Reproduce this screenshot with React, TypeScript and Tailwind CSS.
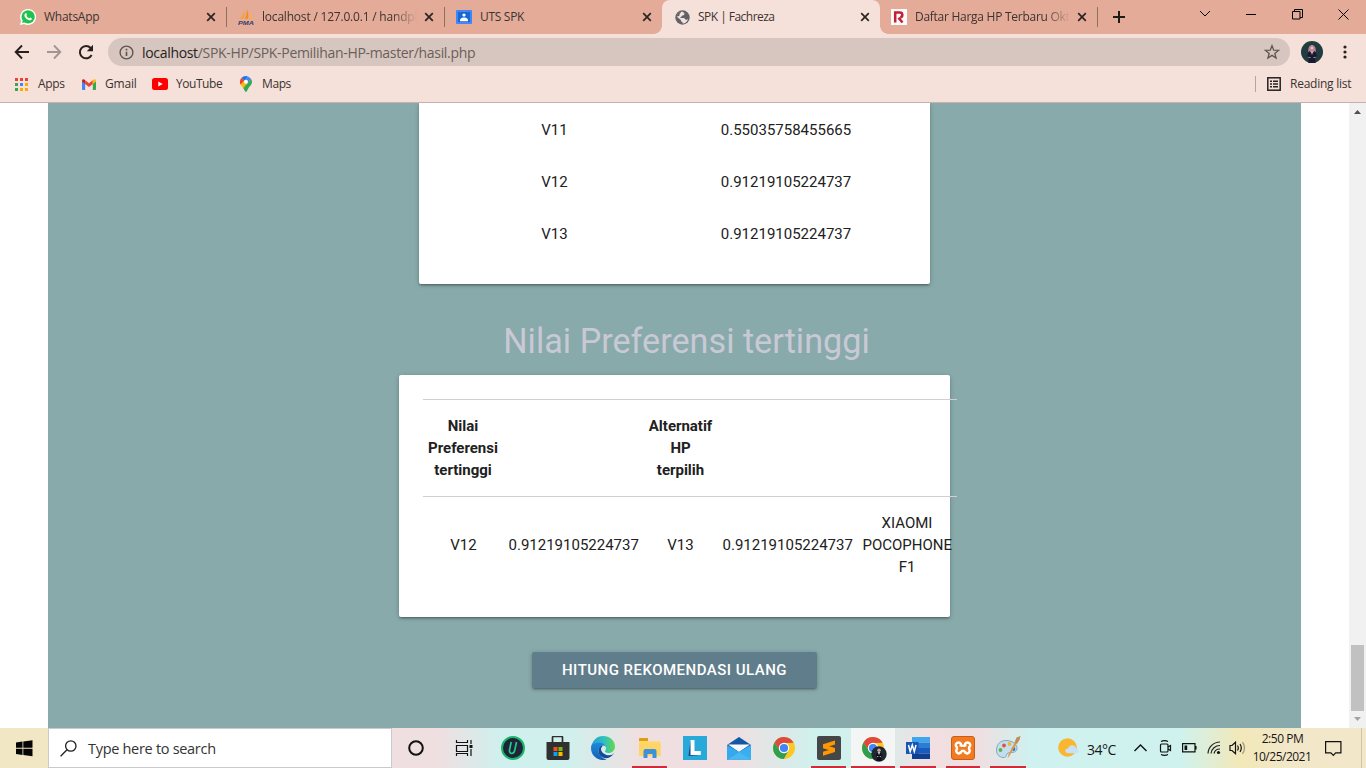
import type { ReactNode } from "react";

const UI = "font-['Open_Sans','Noto_Sans',sans-serif]";

function CloseX() {
  return (
    <svg width="10" height="10" viewBox="0 0 10 10" className="shrink-0">
      <path d="M1.2 1.2 8.8 8.8M8.8 1.2 1.2 8.8" stroke="#2b2422" strokeWidth="1.7" />
    </svg>
  );
}

/* ---------- favicons ---------- */

function WhatsAppIcon() {
  return (
    <svg width="16" height="16" viewBox="0 0 24 24">
      <path d="M12 0a12 12 0 0 0-10.300 18L0 24l6.200-1.600A12 12 0 1 0 12 0z" fill="#fff" />
      <circle cx="12.200" cy="11.800" r="10" fill="#1fc24d" />
      <path d="M3 21l1.500-5 4 3.500z" fill="#1fc24d" />
      <path d="M8.300 6.300c.5-.4 1-.3 1.300.3l.8 1.900c.2.500-.8 1.300-.8 1.700.8 1.700 2.200 3 4 3.800.5 0 1.200-1.400 1.700-1.200l2.100 1c.5.300.4 1.100 0 1.800-.8 1.200-2.300 1.600-3.900 1.100-3.200-.9-5.600-3.200-6.700-5.900-.6-1.700.3-3.500 1.500-4.500z" fill="#fff" />
    </svg>
  );
}

function PmaIcon() {
  return (
    <svg width="16" height="16" viewBox="0 0 16 16">
      <path d="M1 10C4 8.500 5.500 5 6 1.500 7 4 6.800 7.500 5.500 9.700z" fill="#f8a13a" />
      <path d="M6.800 9.800C8.600 7.500 8.400 4 9 .5c1.500 3 1.600 6 1 9.200z" fill="#f68d1c" />
      <path d="M11 9.700c.8-2 .7-4.200.6-6.200C13.500 5.500 14.500 8 15.500 10z" fill="#fbb050" />
      <text x="0" y="15.500" fontSize="6.200" fontWeight="900" fontStyle="italic" fontFamily="Liberation Sans, sans-serif" textLength="16" lengthAdjust="spacingAndGlyphs" fill="#34406f">PMA</text>
    </svg>
  );
}

function ClassroomIcon() {
  return (
    <svg width="16" height="14" viewBox="0 0 16 14">
      <rect width="16" height="14" rx="1" fill="#4285f4" />
      <rect x="2" y="2" width="12" height="10" fill="#1967d2" />
      <circle cx="8" cy="5" r="1.600" fill="#fff" />
      <path d="M4 11.200V9.700C4.800 8 6.500 7.600 8 7.600s3.200.4 4 2.100v1.500z" fill="#fff" />
    </svg>
  );
}

function GlobeIcon() {
  return (
    <svg width="15" height="15" viewBox="0 0 20 20">
      <circle cx="10" cy="10" r="9.600" fill="#5f6368" />
      <path d="M10.500 2.300c1.500.8 1 2.200 2.100 2.500.8.500-.6 2.400-2.500 2.600-1.200.1-.9 1.900-2.600 2-.6.300-.6 1.300.3 1.300h3.800c1.800.2 1.600 2.200 3.500 2.400 1.200 0 2-.8 2.500-1.200-1 3.500-4.300 6.100-7.500 6v-2c-1.800-.1-2.300-1-2.200-2.600L2.500 9c.4-4 3.900-7.200 8-6.700z" fill="#f5e1da" />
      <path d="M2.400 8.800c.3-3.600 2.700-5.800 6.100-6.500L6.300 5l-.6 3.100z" fill="#5f6368" />
    </svg>
  );
}

function RIcon() {
  return (
    <svg width="16" height="16" viewBox="0 0 16 16">
      <rect width="16" height="16" fill="#fafafa" />
      <path d="M4.200 13.500V3.500h4.600c3.200 0 3.400 4.400.4 4.800M7.500 8.800l4 4.700" stroke="#c51f36" strokeWidth="2.500" fill="none" />
    </svg>
  );
}

type TabProps = { icon: ReactNode; title: string; active?: boolean; fade?: boolean; line?: boolean; track?: string };

function Tab({ icon, title, active, fade, line, track = "" }: TabProps) {
  return (
    <div className={`relative flex h-[34px] w-[218px] shrink-0 items-center pl-3 pr-[10px] ${active ? "rounded-t-[8px] bg-[#f5e1da]" : ""}`}>
      {active && (
        <>
          <span className="absolute -left-2 bottom-0 size-2 bg-[radial-gradient(circle_at_0_0,#e3ab98_7.500px,#f5e1da_8px)]" />
          <span className="absolute -right-2 bottom-0 size-2 bg-[radial-gradient(circle_at_100%_0,#e3ab98_7.500px,#f5e1da_8px)]" />
        </>
      )}
      <span className="flex w-4 shrink-0 justify-center">{icon}</span>
      <span
        className={`ml-2 min-w-0 flex-1 whitespace-nowrap text-[12px] text-[#3d3331] ${track} ${fade ? "[mask-image:linear-gradient(to_right,black_130px,transparent_155px)]" : ""}`}
      >
        {title}
      </span>
      <CloseX />
      {line && <span className="absolute right-[-1px] top-[7px] h-5 w-px bg-[#8d6f65]" />}
    </div>
  );
}

function TabStrip() {
  return (
    <div className="flex h-[34px] bg-[#e3ab98] pl-2">
      <Tab icon={<WhatsAppIcon />} title="WhatsApp" line track="tracking-[-0.250px]" />
      <Tab icon={<PmaIcon />} title="localhost / 127.0.0.1 / handph" fade line track="tracking-[-0.200px]" />
      <Tab icon={<ClassroomIcon />} title="UTS SPK" track="tracking-[-0.300px]" />
      <Tab icon={<GlobeIcon />} title="SPK | Fachreza" active track="tracking-[-0.530px]" />
      <div className="-ml-px flex">
        <Tab icon={<RIcon />} title="Daftar Harga HP Terbaru Okt" fade line track="tracking-[-0.270px]" />
      </div>
      <svg className="ml-[16px] mt-[11px] shrink-0" width="12" height="12" viewBox="0 0 12 12">
        <path d="M6 0v12M0 6h12" stroke="#201a19" strokeWidth="2" />
      </svg>
      <div className="ml-auto flex h-7 items-center text-black">
        <svg className="mr-[35px]" width="12" height="12" viewBox="0 0 12 12" fill="none" stroke="currentColor"><path d="m1 3 5 5 5-5" /></svg>
        <svg className="mr-[35px]" width="11" height="11" viewBox="0 0 11 11" stroke="currentColor"><path d="M0 5.500h10" /></svg>
        <svg className="mr-[35px]" width="11" height="11" viewBox="0 0 11 11" fill="none" stroke="currentColor"><path d="M.5 2.500h7.500v7.500H.5zM2.500 2.500v-2h8v8H8" /></svg>
        <svg className="mr-[17px]" width="11" height="11" viewBox="0 0 11 11" stroke="currentColor"><path d="m.5.5 10 10M10.500.5l-10 10" /></svg>
      </div>
    </div>
  );
}

function Toolbar() {
  return (
    <div className="flex h-9 items-center bg-[#f5e1da] pl-[14px]">
      <svg width="16" height="16" viewBox="0 0 16 16" fill="none" stroke="#27201f" strokeWidth="1.900"><path d="M15 8H2M8 1.500 1.700 8 8 14.500" /></svg>
      <svg className="ml-4" width="16" height="16" viewBox="0 0 16 16" fill="none" stroke="#a39593" strokeWidth="1.900"><path d="M1 8h13M8 1.500 14.300 8 8 14.500" /></svg>
      <svg className="ml-4" width="16" height="16" viewBox="0 0 16 16"><path d="M13.600 11A6.200 6.200 0 1 1 12.700 4" fill="none" stroke="#27201f" strokeWidth="2" /><path d="M15 .8v6.400H8.800z" fill="#27201f" /></svg>
      <div className="ml-[14px] flex h-7 w-[1182px] items-center rounded-full bg-[#d7c6bf] pl-[11px] pr-[10px]">
        <svg width="15" height="15" viewBox="0 0 15 15" fill="none" stroke="#5c5452"><circle cx="7.500" cy="7.500" r="6.400" strokeWidth="1.400" /><path d="M7.500 6.700v4.300M7.500 3.800v1.600" strokeWidth="1.600" /></svg>
        <span className="ml-2 flex-1 whitespace-nowrap text-[14px] tracking-[-0.320px] text-[#6a5f5b]">
          <span className="text-[#272120]">localhost</span>/SPK-HP/SPK-Pemilihan-HP-master/hasil.php
        </span>
        <svg width="16" height="16" viewBox="0 0 24 24" fill="none" stroke="#5f5653" strokeWidth="2"><path d="m12 2.500 2.600 6.700 7.200.4-5.600 4.500 1.900 7L12 17.100 5.900 21.100l1.900-7-5.600-4.500 7.200-.4z" /></svg>
      </div>
      <svg className="ml-[11px]" width="22" height="22" viewBox="0 0 22 22">
        <circle cx="11" cy="11" r="11" fill="#213b41" />
        <path d="M7.200 11C7.200 6 8.500 4 11 4s3.800 2 3.800 7L13.500 12h-5z" fill="#b98396" />
        <circle cx="11" cy="7" r="1.500" fill="#e6c0a9" />
        <path d="M6 14.500 8 10l3 2 3-2 2 4.500-1.800 1.500.5 6h-7.400l.5-6z" fill="#151c31" />
        <path d="M9.500 10 11 14l1.500-4z" fill="#d3a3ad" />
        <path d="M7.500 16.500h2M12.500 16.500h2" stroke="#c98f80" />
      </svg>
      <svg className="ml-5" width="4" height="14" viewBox="0 0 4 14" fill="#27201f"><circle cx="2" cy="2" r="1.600" /><circle cx="2" cy="7" r="1.600" /><circle cx="2" cy="12" r="1.600" /></svg>
    </div>
  );
}

const appDots = ["#ea4335", "#ea4335", "#ea4335", "#34a853", "#4285f4", "#fbab05", "#34a853", "#fbab05", "#fbab05"];

function Bookmarks() {
  return (
    <div className="flex h-[33px] items-center border-b border-[#c3b2ad] bg-[#f5e1da] pb-1 pl-[15px] pr-[15px] text-[12px] text-[#3b3230]">
      <div className="grid w-[13px] grid-cols-[repeat(3,3px)] gap-[2px]">
        {appDots.map((c, i) => <span key={i} className="size-[3px]" style={{ background: c }} />)}
      </div>
      <span className="ml-[10px] w-[27px] whitespace-nowrap tracking-[-0.300px]">Apps</span>
      <svg className="ml-[17px]" width="14" height="11" viewBox="0 0 14 11">
        <path d="M0 2v8.200c0 .5.300.8.800.8h2.400V4.600z" fill="#4285f4" />
        <path d="M14 2v8.200c0 .5-.3.800-.8.800h-2.400V4.600z" fill="#34a853" />
        <path d="M3.200 1.200 7 4.200l3.800-3v3.700L7 7.900 3.200 4.900z" fill="#ea4335" />
        <path d="M0 2C0 0 1.800-.4 3.200 1.200v3.700L0 2.500z" fill="#c5221f" />
        <path d="M14 2c0-2-1.800-2.400-3.200-.8v3.700l3.200-2.400z" fill="#fbbc04" />
      </svg>
      <span className="ml-[9px] w-[31px] whitespace-nowrap tracking-[-0.180px]">Gmail</span>
      <svg className="ml-4" width="16" height="12" viewBox="0 0 16 12"><rect width="16" height="12" rx="2.500" fill="#f00" /><path d="m6.300 3.500 4.400 2.500-4.400 2.500z" fill="#fff" /></svg>
      <span className="ml-2 w-[46px] whitespace-nowrap tracking-[-0.450px]">YouTube</span>
      <svg className="ml-[18px]" width="12" height="16" viewBox="0 0 12 16">
        <path d="M6 0a6 6 0 0 0-4.600 2.100L4.500 4.800 8 .4A6 6 0 0 0 6 0z" fill="#1a73e8" />
        <path d="M1.400 2.100A6 6 0 0 0 .7 8.800l3.800-4z" fill="#ea4335" />
        <path d="M8 .4 4.300 4.800l3.300 2.800 3.600-4.300A6 6 0 0 0 8 .4z" fill="#4285f4" />
        <path d="M.7 8.800c.6 1.200 1.700 2 2.500 3.300L7.800 7.400 4.400 4.500z" fill="#fbbc04" />
        <path d="M11.200 3.300 3.200 12.100C4.500 14 5 16 6 16s1.400-2.600 3-4.800C10.500 9.500 12 8.300 12 6c0-1-.3-1.900-.8-2.700z" fill="#34a853" />
        <circle cx="6" cy="5.800" r="2" fill="#fff" />
      </svg>
      <span className="ml-[10px] whitespace-nowrap tracking-[-0.400px]">Maps</span>
      <div className="ml-auto flex items-center">
        <span className="h-4 w-px bg-[#b9a49d]" />
        <svg className="ml-[11px]" width="14" height="14" viewBox="0 0 14 14" fill="none" stroke="#27201f"><rect x=".8" y=".8" width="12.400" height="12.400" strokeWidth="1.500" /><path d="M3 4.200h2M6 4.200h5M3 7h2M6 7h5M3 9.800h2M6 9.800h5" strokeWidth="1.400" /></svg>
        <span className="ml-[9px] w-[61px] whitespace-nowrap tracking-[-0.250px]">Reading list</span>
      </div>
    </div>
  );
}

/* ---------- page ---------- */

const scores = [
  ["V11", "0.55035758455665"],
  ["V12", "0.91219105224737"],
  ["V13", "0.91219105224737"],
];

const cardShadow = "shadow-[0_2px_2px_0_rgba(0,0,0,0.14),0_3px_1px_-2px_rgba(0,0,0,0.12),0_1px_5px_0_rgba(0,0,0,0.2)]";

function Page() {
  return (
    <div className="flex h-[625px] bg-white font-[Roboto,sans-serif] text-[15px] leading-[22px] text-[#212121]">
      <main className="ml-12 flex w-[1253px] flex-col items-center overflow-hidden bg-[#88aaaa] pr-px">
        <section className={`h-[181px] w-[511px] shrink-0 rounded-b-[2px] bg-white px-6 pt-px ${cardShadow}`}>
          <table className="w-full table-fixed text-center">
            <colgroup><col className="w-[224px]" /><col /></colgroup>
            <tbody>
              {scores.map(([k, v]) => (
                <tr key={k} className="h-[52px]"><td className="px-[5px] py-[15px]">{k}</td><td className="px-[5px] py-[15px]">{v}</td></tr>
              ))}
            </tbody>
          </table>
        </section>
        <h2 className="mt-[38px] h-[38px] whitespace-nowrap pl-[25px] text-[34.200px] leading-[38px] text-[#c9c9d6]">Nilai Preferensi tertinggi</h2>
        <section className={`mt-[15px] h-[242px] w-[551px] shrink-0 rounded-[2px] bg-white p-6 ${cardShadow}`}>
          <table className="w-[534px] table-fixed border-separate border-spacing-0 text-center">
            <colgroup>
              <col className="w-[81px]" /><col className="w-[140px]" /><col className="w-[74px]" /><col className="w-[140px]" /><col className="w-[99px]" />
            </colgroup>
            <thead>
              <tr>
                {["Nilai Preferensi tertinggi", "", "Alternatif HP terpilih", "", ""].map((h, i) => (
                  <th key={i} className="border-y border-[#d0d0d0] px-[5px] py-[15px] font-bold tracking-[-0.020px]">{h}</th>
                ))}
              </tr>
            </thead>
            <tbody>
              <tr>
                {["V12", "0.91219105224737", "V13", "0.91219105224737", "XIAOMI POCOPHONE F1"].map((c, i) => (
                  <td key={i} className={`py-[15px] pr-[5px] ${i === 0 ? "pl-[6px]" : "pl-[5px]"}`}>{c}</td>
                ))}
              </tr>
            </tbody>
          </table>
        </section>
        <button className={`mt-[35px] h-9 w-[285px] shrink-0 whitespace-nowrap rounded-[2px] bg-[#607d8b] pl-px text-[15px] font-medium leading-9 tracking-[0.480px] text-white ${cardShadow}`}>
          HITUNG REKOMENDASI ULANG
        </button>
      </main>
      <div className="ml-12 flex w-[17px] flex-col items-center bg-[#f1f1f1]">
        <svg className="mt-[7px]" width="7" height="4" viewBox="0 0 7 4"><path d="M3.500 0 7 4H0z" fill="#505050" /></svg>
        <div className="mt-auto h-[66px] w-[13px] bg-[#c1c1c1]" />
        <svg className="mb-[7px] mt-[6px]" width="7" height="4" viewBox="0 0 7 4"><path d="M0 0h7L3.500 4z" fill="#a3a3a3" /></svg>
      </div>
    </div>
  );
}

/* ---------- taskbar ---------- */

function ChromeIcon({ avatar }: { avatar?: boolean }) {
  return (
    <svg width="26" height="26" viewBox="0 0 26 26" className="mt-[2px]">
      <circle cx="12" cy="12" r="11" fill="#fbc926" />
      <path d="M2.500 6.500A11 11 0 0 1 21.600 6.700L12 7 7.700 14.500z" fill="#de4a3d" />
      <path d="M2.500 6.500a11 11 0 0 0 9.300 16.500l4.500-8L12 17l-4.300-2.500z" fill="#2f9e4f" />
      <circle cx="12" cy="12" r="5.200" fill="#fff" />
      <circle cx="12" cy="12" r="4.100" fill="#4285f4" />
      {avatar && (
        <g>
          <circle cx="18" cy="18" r="7.700" fill="#1f292e" />
          <path d="M15.500 25l.8-4-1.500-1 1.500-4h3.400l1.500 4-1.500 1 .8 4z" fill="#0d1019" />
          <circle cx="18" cy="14.200" r="1.700" fill="#c9a0a6" />
          <path d="M16.500 16h3L18 19z" fill="#c7bbc5" />
          <path d="M16 20.500h1.300M18.700 20.500H20" stroke="#bb9a99" />
        </g>
      )}
    </svg>
  );
}

const taskIcons: { w: string; run?: boolean; hot?: boolean; el: ReactNode }[] = [
  { w: "w-[48px]", el: <svg width="18" height="18" viewBox="0 0 18 18"><circle cx="9" cy="9" r="6.800" fill="none" stroke="#111" strokeWidth="2" /></svg> },
  { w: "w-[48px]", el: <svg width="18" height="18" viewBox="0 0 18 18" fill="none" stroke="#111" strokeWidth="1.200"><path d="M1.500 1v2.500h11V1M1.500 6.500h11v6h-11zM1.500 17v-2.500h11V17M16 1v4M16 10v7" /><path d="M14.500 6h3v3h-3z" fill="#111" stroke="none" /></svg> },
  { w: "w-[49px]", el: <svg width="24" height="24" viewBox="0 0 24 24"><circle cx="12" cy="12" r="11" fill="#20243a" stroke="#19b76a" strokeWidth="2" /><path d="M10.200 6 8.500 14c-.6 4.500 4.500 4.500 5.200.4L15.500 6" fill="none" stroke="#1ecb83" strokeWidth="1.700" /></svg> },
  { w: "w-[42px]", el: <svg width="24" height="24" viewBox="0 0 24 24"><path d="M6.500 7V1.500q0-1 1-1h8q1 0 1 1V7" fill="none" stroke="#2f2f2f" strokeWidth="1.700" /><path d="M.5 6h23v16q0 2-2 2h-19q-2 0-2-2z" fill="#303030" /><path fill="#f25022" d="M7.500 11h4v4h-4z" /><path fill="#7fba00" d="M12.500 11h4v4h-4z" /><path fill="#00a4ef" d="M7.500 16h4v4h-4z" /><path fill="#ffb900" d="M12.500 16h4v4h-4z" /></svg> },
  { w: "w-[48px]", el: <svg width="24" height="24" viewBox="0 0 24 24"><defs><linearGradient id="edgeTop" x1="0" x2="1"><stop stopColor="#249dd6" /><stop offset=".55" stopColor="#2dc2bd" /><stop offset="1" stopColor="#67d84e" /></linearGradient><linearGradient id="edgeLow" x1="0" y1="0" x2="0" y2="1"><stop stopColor="#1b8bdc" /><stop offset="1" stopColor="#1560b4" /></linearGradient></defs><path d="M0 12C1 4.500 6 0 12 0c7 0 12 5 12 10.500 0 4-3 6.500-6.500 6.500-2.300 0-3.800-.8-3.500-1.700.6-1 1-1.700 1-3.300C15 9 11.500 6.500 7.500 6.500 4 6.500 1 8.500 0 12z" fill="url(#edgeTop)" /><path d="M0 12c0-3.500 3.500-5.700 7.500-5.700 3.600 0 6.500 2 7.300 4.500-1-.9-2-1.200-3-1.200-3.500.6-5.300 4.400-3.800 8 1.200 3 4 5 7.500 5.800-7 2.400-15.500-2.500-15.500-11.400z" fill="url(#edgeLow)" /><path d="M8.200 12c-1.500 3-.5 6.500 2 8.500 4 3 9.300 1.800 12.300-2.500.3-.5-.1-.7-.5-.5-4 2-9.500.9-11-3-.8-2-.1-3.800.8-4.900-1.500.2-2.900 1-3.600 2.400z" fill="#124b97" /><path d="M22 17.500c-4 2-9.500.9-11-3-.3-1-.3-2 0-2.800" fill="none" stroke="#d5eff3" strokeWidth="1.500" /></svg> },
  { w: "w-[45px]", run: true, el: <svg width="22" height="20" viewBox="0 0 22 20"><path d="M0 1.500Q0 1 .5 1H8l2 2.500h10.500q1 0 1 1V18H0z" fill="#ffd765" /><path d="M0 1q0-1 1-1h8v3H0z" fill="#dc9e13" /><path d="M0 18V6h21.500v12z" fill="#fdd566" /><path d="M4.500 20v-7q0-2 2-2h9q2 0 2 2v7h-4v-4h-5v4z" fill="#3f90d8" /></svg> },
  { w: "w-[45px]", el: <svg width="24" height="24" viewBox="0 0 24 24"><path fill="#27a9da" d="M0 0h24v24H0z" /><path d="m7.500 5-2 15 11-1-6-3z" fill="#174478" /><path d="M7.500 4h4v11h6.300v4H7.500z" fill="#fff" /></svg> },
  { w: "w-[44px]", el: <svg width="24" height="23" viewBox="0 0 24 23"><path d="M0 8 12 0l12 8v14.500H0z" fill="#1258a7" /><path d="M1 7.500h22L12 15z" fill="#f7f8f9" /><path d="m0 8 12 7-12 7.500z" fill="#35a9ed" /><path d="M24 8v14.500L12 15z" fill="#2495e1" /><path d="M24 8 0 22.500h24z" fill="#39aef0" /><path d="m12 15 12 7.500H0z" fill="#48b8f1" /></svg> },
  { w: "w-[45px]", el: <span className="pl-[2px]"><ChromeIcon /></span> },
  { w: "w-[45px]", run: true, el: <svg width="24" height="24" viewBox="0 0 24 24"><rect width="24" height="24" rx="2" fill="#464646" /><path d="m6 8.300 12-3.800v4l-12 3.800zM6 15.700l12-3.700v4L6 19.800zM6 8.300l12 3.700v4L6 12.300z" fill="#ff9800" /></svg> },
  { w: "w-[44px]", run: true, hot: true, el: <span className="pl-[2px]"><ChromeIcon avatar /></span> },
  { w: "w-[46px]", run: true, el: <svg width="24" height="22" viewBox="0 0 24 22"><path fill="#41a5ee" d="M6 0h18v5.500H6z" /><path fill="#2b7cd3" d="M6 5.500h18V11H6z" /><path fill="#185abd" d="M6 11h18v5.500H6z" /><path fill="#103f91" d="M6 16.500h18V22H6z" /><path fill="#1756b5" d="M0 5h12.500v12H0z" /><path d="m2.500 8 1.700 6.500L6.300 8l2 6.500L10 8" fill="none" stroke="#fff" strokeWidth="1.500" /></svg> },
  { w: "w-[44px]", run: true, el: <svg width="24" height="24" viewBox="0 0 24 24"><rect x=".5" y=".5" width="23" height="23" rx="2.500" fill="#f27b22" stroke="#c95d15" /><path d="M9.800 10.500V7.700A2.700 2.700 0 1 0 7 11.800M14.200 10.500V7.700A2.700 2.700 0 1 1 17 11.800M9.800 15v1.700A2.700 2.700 0 1 1 7 12.200M14.200 15v1.700A2.700 2.700 0 1 0 17 12.200M9.800 9.800h4.400M9.800 15h4.400" fill="none" stroke="#fff" strokeWidth="2.500" /></svg> },
  { w: "w-[46px]", run: true, el: <svg width="25" height="24" viewBox="0 0 25 24"><path d="M10 4.500C4 4.500.8 8.500.5 14c-.2 5 4 8 8 7.500 2.500-.5 1-3.500 3.500-4.500 3-1 8 .5 9-4 .5-5-5-8.500-11-8.500z" fill="#c3dfed" stroke="#7ba8c4" /><circle cx="4.500" cy="14" r="1.900" fill="#60b246" /><circle cx="8" cy="9.500" r="1.900" fill="#e45142" /><circle cx="13.500" cy="8" r="1.900" fill="#efb43e" /><circle cx="17.500" cy="13" r="1.900" fill="#3674be" /><path d="m11.500 22.500 1-4L19 6l2 1.300-7.500 12.500z" fill="#df964d" /><path d="m18.500 6.500 2-5L24.500 0l-1 4-2.500 3.800z" fill="#bd8e58" /></svg> },
];

function Taskbar() {
  return (
    <footer className="flex h-10 bg-[linear-gradient(90deg,#f2e7c5_0,#f2e7c5_48px,#f0dfe1_392px,#efdfe1_440px,#cff0ee_500px,#d0f0ed_570px,#f0dfe0_640px,#efdfe1_735px,#cff1ed_815px,#d4efec_875px,#f1dfe1_930px,#efdfe1_980px,#cff1ef_1030px,#cff2ee_1180px,#f2e8b9_1240px,#f2e7c8_1290px,#f3e7c9_1366px)] text-[#171717]">
      <div className="flex w-12 items-center justify-center">
        <svg width="17" height="17" viewBox="0 0 17 17"><path d="M0 2.500 6.500 1.600v6.200H0zM7.300 1.500 16.500.2v7.600H7.300zM0 8.700h6.500v6.200L0 14zM7.300 8.700h9.200v7.600l-9.200-1.300z" fill="#050505" /></svg>
      </div>
      <div className="flex w-[344px] items-center border border-[#c9cacc] bg-white pl-[11px]">
        <svg width="17" height="17" viewBox="0 0 17 17" fill="none" stroke="#202020" strokeWidth="1.300"><circle cx="10.800" cy="6" r="5.200" /><path d="M7 9.800.6 16.300" /></svg>
        <span className="ml-[11px] whitespace-nowrap pt-[2px] text-[14.500px] tracking-[-0.300px] text-[#333]">Type here to search</span>
      </div>
      <div className="flex">
        {taskIcons.map((t, i) => (
          <div key={i} className={`relative flex items-center justify-center ${t.w} ${t.hot ? "bg-[#f4f6f6]" : ""}`}>
            {t.el}
            {t.run && <span className={`absolute bottom-0 h-[2px] bg-[#cc2d3b] ${t.hot ? "inset-x-0" : "inset-x-[5px]"}`} />}
          </div>
        ))}
      </div>
      <div className="ml-auto flex h-full items-center">
        <svg width="21" height="20" viewBox="0 0 21 20"><circle cx="9.500" cy="9.500" r="9.300" fill="#f9b62e" /><path d="M10 15.200c-4-.3-3.500-5 .2-4.800 1.300-4.600 7.300-4 7.800.1 3.600.5 3.300 4.600.1 4.700z" fill="#c7e2f8" /></svg>
        <span className="ml-[8px] w-[30px] whitespace-nowrap pt-[2px] text-[14px] tracking-[-0.500px]">34°C</span>
        <svg className="ml-[17px]" width="13" height="8" viewBox="0 0 13 8" fill="none" stroke="#111" strokeWidth="1.400"><path d="m.5 7 6-6 6 6" /></svg>
        <svg className="ml-[12px]" width="13" height="16" viewBox="0 0 13 16" fill="none" stroke="#111" strokeWidth="1.200"><rect x="1.500" y="4" width="7.500" height="8" rx="1" /><path d="m9 7 2.500-1.500v5L9 9M2 1.500Q5.500-.3 9 1.500M2 14.500q3.500 1.700 7 0" /></svg>
        <svg className="ml-[10px]" width="15" height="10" viewBox="0 0 15 10" fill="none" stroke="#111" strokeWidth="1.200"><path d="M.6.600h12.400v8.300H.6zM14 3v3.500" /><path d="M2.500 2.500h2.700V7H2.500z" fill="#111" stroke="none" /></svg>
        <svg className="ml-[10px]" width="14" height="14" viewBox="0 0 14 14" fill="none" stroke="#222" strokeWidth="1.200"><path d="M1 12.500A12 12 0 0 1 13 1M4 12.500A9 9 0 0 1 13 4.500M7 12.500A6 6 0 0 1 13 8" /><circle cx="11.500" cy="11.500" r="1.600" fill="#111" stroke="none" /></svg>
        <svg className="ml-[8px]" width="17" height="14" viewBox="0 0 17 14" fill="none" stroke="#111" strokeWidth="1.200"><path d="M1 4.500h2L6.500 1.200v11.500L3 9.500H1zM8.500 4.500q1.600 2.500 0 5M11 3q2.600 4 0 8" /><path d="M13.500 1.200q4 5.800 0 11.600" stroke="#99977d" /></svg>
        <div className="ml-[5px] w-[62px] text-center text-[12px] leading-[18px]">
          <div className="whitespace-nowrap pl-px tracking-[-0.450px]">2:50 PM</div>
          <div className="whitespace-nowrap tracking-[-0.500px]">10/25/2021</div>
        </div>
        <svg className="ml-[12px]" width="17" height="17" viewBox="0 0 17 17" fill="none" stroke="#111" strokeWidth="1.200"><path d="M.6 1.600h15.300v11.300h-5.200l-2.400 2.500-2.400-2.500H.6z" /></svg>
        <span className="ml-[19px] mr-1 h-full w-px bg-[#cfc4a4]" />
      </div>
    </footer>
  );
}

export default function App() {
  return (
    <div className={`flex h-[768px] w-[1366px] flex-col overflow-hidden ${UI}`}>
      <TabStrip />
      <Toolbar />
      <Bookmarks />
      <Page />
      <Taskbar />
    </div>
  );
}
